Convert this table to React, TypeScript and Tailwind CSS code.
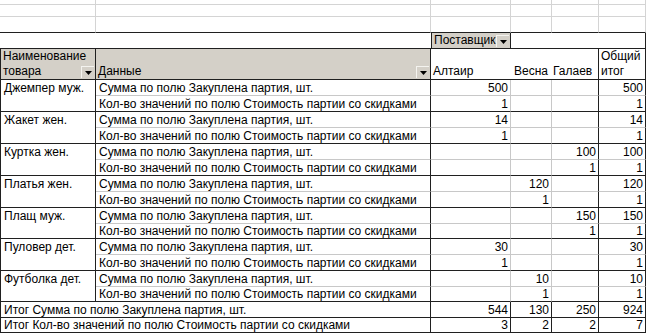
import React from 'react';

type Group = { name: string; sum: string[]; cnt: string[] };

const groups: Group[] = [
  { name: 'Джемпер муж.', sum: ['500', '', '', '500'], cnt: ['1', '', '', '1'] },
  { name: 'Жакет жен.', sum: ['14', '', '', '14'], cnt: ['1', '', '', '1'] },
  { name: 'Куртка жен.', sum: ['', '', '100', '100'], cnt: ['', '', '1', '1'] },
  { name: 'Платья жен.', sum: ['', '120', '', '120'], cnt: ['', '1', '', '1'] },
  { name: 'Плащ муж.', sum: ['', '', '150', '150'], cnt: ['', '', '1', '1'] },
  { name: 'Пуловер дет.', sum: ['30', '', '', '30'], cnt: ['1', '', '', '1'] },
  { name: 'Футболка дет.', sum: ['', '10', '', '10'], cnt: ['', '1', '', '1'] },
];

const SUM_LABEL = 'Сумма по полю Закуплена партия, шт.';
const CNT_LABEL = 'Кол-во значений по полю Стоимость партии со скидками';

// right borders for the four value columns: Алтаир, Весна, Галаев, Общий итог
const valueBorders = ['border-r-[#c8c8c8]', 'border-r-[#c8c8c8]', 'border-r-[#202020]', 'border-r-[#202020]'];

const Arrow = () => (
  <span className="flex h-[12px] w-[13px] items-center justify-center border-l border-t border-l-[#f4f3ef] border-t-[#f4f3ef] bg-[#d4d0c8]">
    <svg width="7" height="4" viewBox="0 0 7 4">
      <path d="M0 0h7L3.5 4z" fill="#000" />
    </svg>
  </span>
);

const Num = ({ v, border, bottom }: { v: string; border: string; bottom: string }) => (
  <div className={`flex items-end justify-end border-r border-b pr-[2px] leading-[14px] ${border} ${bottom}`}>{v}</div>
);

const GridRow = ({ last }: { last?: boolean }) => (
  <>
    {[0, 1, 2, 3, 4, 5].map((i) => (
      <div
        key={i}
        className={`border-r border-b border-r-[#d4d4d4] ${last ? 'border-b-[#202020]' : 'border-b-[#d4d4d4]'}`}
      />
    ))}
  </>
);

export default function App() {
  return (
    <div className="h-[334px] w-[646px] overflow-hidden bg-white font-['Liberation_Sans',Arial,sans-serif] text-[12px] text-black">
      <div className="grid grid-cols-[96px_335px_80px_41px_47px_47px] grid-rows-[5px_12px_16px_16px_31px_16px_16px_16px_16px_16px_16px_16px_16px_16px_15px_16px_16px_16px_15px_16px_15px]">
        {/* plain sheet rows above the pivot */}
        <GridRow />
        <GridRow />
        <GridRow last />

        {/* page field row */}
        <div className="col-span-2 border-b border-b-[#202020]" />
        <div className="flex items-end justify-between border-r border-b border-l border-[#202020] bg-[#d4d0c8] pl-[2px] pr-[1px] pb-[1px] leading-[14px]">
          <span>Поставщик</span>
          <Arrow />
        </div>
        <div className="col-span-3 border-r border-b border-[#202020]" />

        {/* header row */}
        <div className="flex flex-col justify-end border-r border-b border-l border-[#202020] bg-[#d4d0c8] pl-[2px] leading-[15px]">
          <span>Наименование</span>
          <div className="flex items-end justify-between pr-[1px] pb-[1px]">
            <span className="leading-[14px]">товара</span>
            <Arrow />
          </div>
        </div>
        <div className="flex items-end justify-between border-r border-b border-[#202020] bg-[#d4d0c8] pl-[2px] pr-[1px] pb-[1px] leading-[14px]">
          <span>Данные</span>
          <Arrow />
        </div>
        <div className="flex items-end border-b border-[#202020] pl-[2px] leading-[15px]">Алтаир</div>
        <div className="flex items-end border-b border-[#202020] pl-[3px] leading-[15px]">Весна</div>
        <div className="flex items-end border-r border-b border-[#202020] pl-[1px] leading-[15px]">Галаев</div>
        <div className="flex flex-col justify-end border-r border-b border-[#202020] pl-[2px] leading-[15px]">
          <span>Общий</span>
          <span>итог</span>
        </div>

        {/* data rows */}
        {groups.map((g) => (
          <React.Fragment key={g.name}>
            <div className="row-span-2 border-r border-b border-l border-[#202020] pl-[3px]">
              <div className="flex h-[15px] items-end leading-[14px]">{g.name}</div>
            </div>
            <div className="flex items-end border-r border-b border-r-[#202020] border-b-[#c8c8c8] pl-[3px] leading-[14px]">
              {SUM_LABEL}
            </div>
            {g.sum.map((v, i) => (
              <Num key={i} v={v} border={valueBorders[i]} bottom="border-b-[#c8c8c8]" />
            ))}
            <div className="flex items-end border-r border-b border-[#202020] pl-[3px] leading-[14px]">
              {CNT_LABEL}
            </div>
            {g.cnt.map((v, i) => (
              <Num key={i} v={v} border={valueBorders[i]} bottom="border-b-[#202020]" />
            ))}
          </React.Fragment>
        ))}

        {/* grand totals */}
        <div className="col-span-2 flex items-end border-r border-b border-l border-[#202020] pl-[3px] leading-[14px]">
          Итог {SUM_LABEL}
        </div>
        {['544', '130', '250', '924'].map((v, i) => (
          <Num key={i} v={v} border="border-r-[#202020]" bottom="border-b-[#202020]" />
        ))}
        <div className="col-span-2 flex items-end border-r border-b border-l border-[#202020] pl-[3px] leading-[14px]">
          Итог {CNT_LABEL}
        </div>
        {['3', '2', '2', '7'].map((v, i) => (
          <Num key={i} v={v} border="border-r-[#202020]" bottom="border-b-[#202020]" />
        ))}
      </div>
    </div>
  );
}
